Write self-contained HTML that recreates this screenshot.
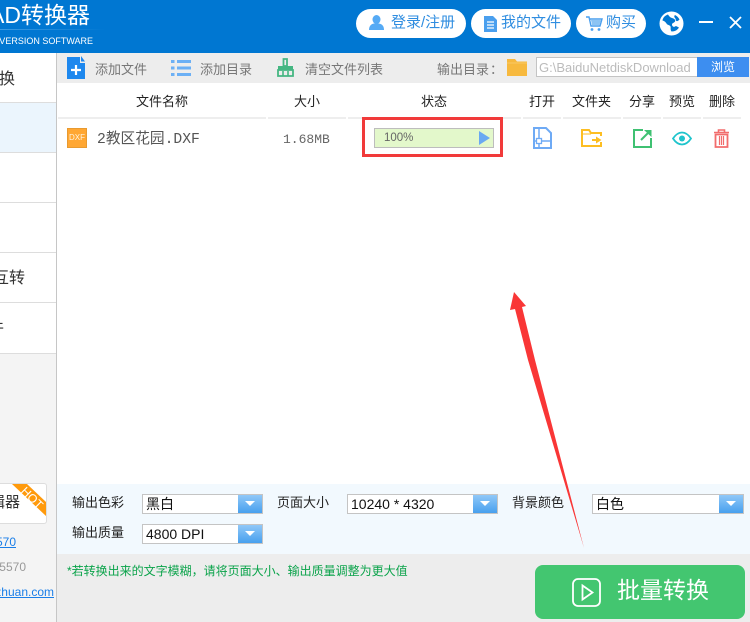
<!DOCTYPE html>
<html><head><meta charset="utf-8"><style>
html,body{margin:0;padding:0}
body{width:750px;height:622px;overflow:hidden;position:relative;background:#fff;font-family:"Liberation Sans","Noto Sans CJK SC",sans-serif;color:#222}
.a{position:absolute;white-space:nowrap}
.clip{position:absolute;overflow:hidden}
.t{position:absolute;white-space:nowrap;line-height:18px;font-size:13px;color:#222}
.g{color:#777}
.pill{position:absolute;top:9px;height:29px;background:#fff;border-radius:15px;color:#2f8de0;font-size:15px;line-height:28px;white-space:nowrap}
.hl{position:absolute;top:117px;height:2px;background:#eee}
.sep{position:absolute;left:0;width:56px;height:1px;background:#ddd}
.sel{position:absolute;height:18px;background:#fff;border:1px solid #c4c4c4;font-size:14px;line-height:19px;color:#111;padding-left:3px;white-space:nowrap}
.dd{position:absolute;top:0;right:0;width:24px;height:18px;background:linear-gradient(#90c8f8,#48a0ee)}
.dd:after{content:"";position:absolute;left:7px;top:6px;border-left:5px solid transparent;border-right:5px solid transparent;border-top:5px solid #fff}
</style></head><body>

<!-- header -->
<div class="a" style="left:0;top:0;width:750px;height:53px;background:#0077d2"></div>
<div class="clip" style="left:0;top:0;width:120px;height:53px">
<div class="a" style="right:30px;top:-4px;font-size:23px;line-height:38px;color:#fff">CAD转换器</div>
<div class="a" style="left:0;top:29px;width:105px;height:1px;background:linear-gradient(90deg,#3d9be2,#0077d2)"></div>
<div class="a" style="right:27px;top:34px;font-size:9px;line-height:14px;color:#fff">CONVERSION SOFTWARE</div>
</div>

<div class="pill" style="left:356px;width:110px"><svg class="a" style="left:13px;top:6px" width="15" height="15" viewBox="0 0 15 15"><ellipse cx="7.500" cy="4.500" rx="4" ry="4.500" fill="#55aaf5"/><path d="M0 15c0-4 2-6 5-6.500h5c3 .5 5 2.500 5 6.500z" fill="#55aaf5"/></svg><span class="a" style="left:35px">登录/注册</span></div>
<div class="pill" style="left:471px;width:100px"><svg class="a" style="left:13px;top:7px" width="13" height="16" viewBox="0 0 13 16"><path d="M0 0h9l4 4v12H0z" fill="#4a9fee"/><path d="M3 6h7M3 9h7M3 12h7" stroke="#fff" stroke-width="1.200"/></svg><span class="a" style="left:30px">我的文件</span></div>
<div class="pill" style="left:576px;width:70px"><svg class="a" style="left:10px;top:7px" width="17" height="16" viewBox="0 0 17 16"><path d="M0 1h3l2 9h9l2-7H4" fill="none" stroke="#4a9fee" stroke-width="1.400"/><path d="M5 4h10l-1.500 5H6z" fill="#8cc4f4"/><circle cx="6" cy="13.500" r="1.400" fill="#4a9fee"/><circle cx="13" cy="13.500" r="1.400" fill="#4a9fee"/></svg><span class="a" style="left:30px">购买</span></div>

<svg class="a" style="left:659px;top:11px" width="25" height="25" viewBox="0 0 25 25"><circle cx="12.500" cy="12.500" r="12" fill="#fff"/><path d="M9 3.500c-3 1-5 3-5.500 6 2 .5 3 1.500 4 3 1 2 3 1 4 3 .5 1.500-.5 3 1 5 3.500 0 6-1.500 7.500-4-1.500-.5-3-2-4-1-1.500 1-3-.5-3-2s2-1.500 3-3-1-3-3-3.500-3-2-4-3.500z" fill="#0077d2"/><path d="M16 4c2 1 3.500 2.500 4.500 4.500-1 1-2 2-3 1.500s-.5-2-1.500-3-1-2 0-3z" fill="#0077d2"/></svg>
<div class="a" style="left:699px;top:21px;width:14px;height:2px;background:#fff"></div>
<svg class="a" style="left:729px;top:16px" width="13" height="13" viewBox="0 0 13 13"><path d="M1 1l11 11M12 1L1 12" stroke="#fff" stroke-width="1.800"/></svg>

<!-- sidebar -->
<div class="a" style="left:0;top:53px;width:56px;height:569px;background:#f4f4f4"></div>
<div class="a" style="left:0;top:53px;width:56px;height:300px;background:#fff"></div>
<div class="a" style="left:0;top:103px;width:56px;height:49px;background:#ebf5fd"></div>
<div class="sep" style="top:102px"></div><div class="sep" style="top:152px"></div><div class="sep" style="top:202px"></div><div class="sep" style="top:252px"></div><div class="sep" style="top:302px"></div><div class="sep" style="top:353px"></div>
<div class="clip" style="left:0;top:53px;width:56px;height:569px">
<div class="a" style="right:41px;top:16px;font-size:16px;line-height:22px;color:#333">换</div>
<div class="a" style="right:31px;top:215px;font-size:16px;line-height:22px;color:#333">互转</div>
<div class="a" style="right:52px;top:265px;font-size:16px;line-height:22px;color:#333">件</div>
<div class="a" style="left:0;top:430px;width:46px;height:39px;background:#fff;border:1px solid #ddd;border-left:0;border-radius:0 3px 3px 0;overflow:hidden">
<div class="a" style="right:26px;top:8px;font-size:15px;line-height:22px;color:#333">辑器</div>
<svg class="a" style="left:0;top:0" width="46" height="39"><polygon points="12,0 27,0 46,18 46,32" fill="#ff9a0c"/><text x="32" y="18" transform="rotate(45 32 14)" font-size="12" fill="#fff" text-anchor="middle" font-family="Liberation Sans">HOT</text></svg>
</div>
<div class="a" style="right:40px;top:481px;font-size:12px;line-height:16px;color:#1a7ee8;text-decoration:underline">1565570</div>
<div class="a" style="right:30px;top:506px;font-size:12px;line-height:16px;color:#999">1565570</div>
<div class="a" style="right:2px;top:531px;font-size:12px;line-height:16px;color:#1a7ee8;text-decoration:underline">www.xunzhuan.com</div>
</div>
<div class="a" style="left:56px;top:53px;width:1px;height:569px;background:#c6c6c6"></div>

<!-- toolbar -->
<div class="a" style="left:57px;top:53px;width:693px;height:30px;background:#ededed"></div>
<svg class="a" style="left:67px;top:56px" width="18" height="23" viewBox="0 0 18 23"><path d="M0 1h13v6h5v16H0z" fill="#1e88ee"/><path d="M14 0l4 5.500h-4z" fill="#1e88ee"/><path d="M9 9v10M4 14h10" stroke="#fff" stroke-width="2.200"/></svg>
<div class="t g" style="left:95px;top:61px">添加文件</div>
<svg class="a" style="left:171px;top:60px" width="20" height="16" viewBox="0 0 20 16"><path d="M0 1.500h3.500M6 1.500h14M0 8h3.500M6 8h14M0 14.500h3.500M6 14.500h14" stroke="#6cb0f5" stroke-width="3"/></svg>
<div class="t g" style="left:200px;top:61px">添加目录</div>
<svg class="a" style="left:277px;top:58px" width="17" height="19" viewBox="0 0 17 19"><path d="M6.500 1h3.500v7H6.500z" fill="none" stroke="#45b682" stroke-width="1.800"/><path d="M1 8h15v4H1z" fill="#45b682"/><path d="M1 12h15v6H1z" fill="none" stroke="#45b682" stroke-width="1.800"/><path d="M6 13v5M11 13v5" stroke="#45b682" stroke-width="1.600"/></svg>
<div class="t g" style="left:305px;top:61px">清空文件列表</div>
<div class="t g" style="left:437px;top:61px">输出目录</div>
<div class="t g" style="left:490px;top:61px">：</div>
<svg class="a" style="left:507px;top:59px" width="20" height="17" viewBox="0 0 20 17"><path d="M0 0h8l2 2.500h10V17H0z" fill="#f7b93e"/><path d="M0 4h20" stroke="#fbd98c" stroke-width=".6"/></svg>
<div class="a" style="left:536px;top:57px;width:190px;height:20px;background:#fff;border:1px solid #c4c4c4;box-sizing:border-box;border-right:0"></div>
<div class="a" style="left:539px;top:59px;width:157px;overflow:hidden;font-size:13px;line-height:17px;color:#bbb">G:\BaiduNetdiskDownload</div>
<div class="a" style="left:697px;top:57px;width:52px;height:20px;background:#3d8ef0;color:#fff;font-size:12px;line-height:20px;text-align:center">浏览</div>

<!-- table header -->
<div class="t" style="left:136px;top:93px">文件名称</div>
<div class="t" style="left:294px;top:93px">大小</div>
<div class="t" style="left:421px;top:93px">状态</div>
<div class="t" style="left:529px;top:93px">打开</div>
<div class="t" style="left:572px;top:93px">文件夹</div>
<div class="t" style="left:629px;top:93px">分享</div>
<div class="t" style="left:669px;top:93px">预览</div>
<div class="t" style="left:709px;top:93px">删除</div>
<div class="hl" style="left:58px;width:208px"></div><div class="hl" style="left:268px;width:78px"></div><div class="hl" style="left:348px;width:173px"></div><div class="hl" style="left:523px;width:38px"></div><div class="hl" style="left:563px;width:58px"></div><div class="hl" style="left:623px;width:38px"></div><div class="hl" style="left:663px;width:38px"></div><div class="hl" style="left:703px;width:38px"></div>

<!-- row -->
<div class="a" style="left:67px;top:128px;width:20px;height:20px;background:#ffa733;border:1px solid #e89a30;box-sizing:border-box;color:#fff3de;font-size:8px;line-height:18px;text-align:center">DXF</div>
<div class="a" style="left:97px;top:130px;font-family:'Liberation Mono','Noto Sans CJK SC',monospace;font-size:14.700px;line-height:20px;color:#555">2教区花园.DXF</div>
<div class="a" style="left:283px;top:130px;font-family:'Liberation Mono',monospace;font-size:13px;line-height:20px;color:#666">1.68MB</div>
<div class="a" style="left:362px;top:117px;width:141px;height:40px;border:3px solid #f13a3a;box-sizing:border-box"></div>
<div class="a" style="left:374px;top:128px;width:120px;height:20px;background:#e3f8cb;border:1px solid #bdbdbd;box-sizing:border-box"></div>
<div class="a" style="left:384px;top:131px;font-size:11.500px;line-height:15px;color:#666">100%</div>
<svg class="a" style="left:479px;top:131px" width="12" height="14"><path d="M0 0l11 7L0 14z" fill="#6aa9f2"/></svg>

<svg class="a" style="left:533px;top:127px" width="19" height="22" viewBox="0 0 19 22"><path d="M1 1h12l5 5v15H1z" fill="none" stroke="#6eaaf5" stroke-width="2"/><path d="M6 1v10.500M1 14h2.500M8.500 14H18M6 16.500V21" fill="none" stroke="#6eaaf5" stroke-width="1.500"/><rect x="3.500" y="11.500" width="5" height="5" fill="none" stroke="#6eaaf5" stroke-width="1.300"/></svg>
<svg class="a" style="left:581px;top:129px" width="21" height="18" viewBox="0 0 21 18"><path d="M20 13v4H1V1h7l2 3h10v3" fill="none" stroke="#fdbe22" stroke-width="2"/><path d="M1 5h9" stroke="#fdbe22" stroke-width="1"/><path d="M11 11h5" stroke="#fdbe22" stroke-width="2"/><path d="M15 7.500l5.500 3.500-5.500 3.500z" fill="#fdbe22"/></svg>
<svg class="a" style="left:633px;top:129px" width="19" height="19" viewBox="0 0 19 19"><path d="M10 1H1v17h17V9" fill="none" stroke="#3fc172" stroke-width="2"/><path d="M8 11l7-7" stroke="#3fc172" stroke-width="2"/><path d="M11 1h7.500v7z" fill="#3fc172"/></svg>
<svg class="a" style="left:672px;top:131px" width="20" height="15" viewBox="0 0 20 15"><path d="M1 7.500C4 3 7 1.500 10 1.500s6 1.500 9 6c-3 4.500-6 6-9 6s-6-1.500-9-6z" fill="none" stroke="#1fc4cc" stroke-width="1.800"/><circle cx="10" cy="7.500" r="3" fill="#1fc4cc"/></svg>
<svg class="a" style="left:713px;top:129px" width="17" height="19" viewBox="0 0 17 19"><path d="M1 3.500h15M5.500 3V1h6v2" fill="none" stroke="#f26d6d" stroke-width="1.600"/><path d="M2.500 5.500h12V18h-12z" fill="none" stroke="#f26d6d" stroke-width="1.800"/><path d="M6.500 7v9M8.500 7v9M10.500 7v9" stroke="#f26d6d" stroke-width="1.200"/></svg>

<!-- options -->
<div class="a" style="left:57px;top:484px;width:693px;height:70px;background:#f2f9fe"></div>
<div class="t" style="left:72px;top:494px">输出色彩</div>
<div class="t" style="left:72px;top:524px">输出质量</div>
<div class="t" style="left:277px;top:494px">页面大小</div>
<div class="t" style="left:512px;top:494px">背景颜色</div>
<div class="sel" style="left:142px;top:494px;width:116px">黑白<div class="dd"></div></div>
<div class="sel" style="left:142px;top:524px;width:116px">4800 DPI<div class="dd"></div></div>
<div class="sel" style="left:347px;top:494px;width:146px">10240 * 4320<div class="dd"></div></div>
<div class="sel" style="left:592px;top:494px;width:147px">白色<div class="dd"></div></div>

<!-- footer -->
<div class="a" style="left:57px;top:554px;width:693px;height:68px;background:#ededed"></div>
<div class="a" style="left:67px;top:563px;font-size:12px;line-height:16px;color:#0aa34a">*若转换出来的文字模糊，请将页面大小、输出质量调整为更大值</div>
<div class="a" style="left:535px;top:565px;width:210px;height:54px;background:#43c670;border-radius:8px"></div>
<svg class="a" style="left:572px;top:578px" width="29" height="29" viewBox="0 0 29 29"><rect x="1" y="1" width="27" height="27" rx="5" fill="none" stroke="#fff" stroke-width="1.800"/><path d="M10.500 7.500v14l10-7z" fill="none" stroke="#fff" stroke-width="1.800"/></svg>
<div class="a" style="left:617px;top:573px;font-size:23px;line-height:34px;color:#fff">批量转换</div>

<!-- annotation arrow -->
<svg class="a" style="left:0;top:0" width="750" height="622"><polygon points="514,292 526,306 522,307 535,360 584,548 528,360 515,309 510,310" fill="#f93636"/></svg>

</body></html>
